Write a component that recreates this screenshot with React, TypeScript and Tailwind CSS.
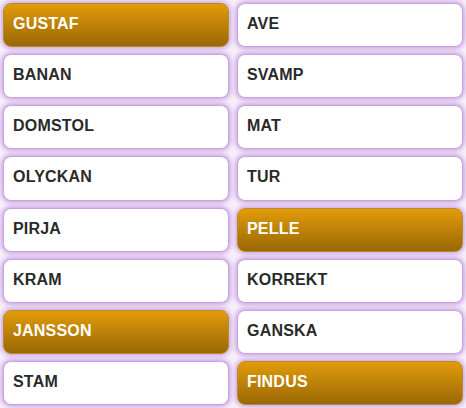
const left = ["GUSTAF", "BANAN", "DOMSTOL", "OLYCKAN", "PIRJA", "KRAM", "JANSSON", "STAM"];
const right = ["AVE", "SVAMP", "MAT", "TUR", "PELLE", "KORREKT", "GANSKA", "FINDUS"];
const picked = new Set(["GUSTAF", "JANSSON", "PELLE", "FINDUS"]);

function Word({ text }: { text: string }) {
  const on = picked.has(text);
  return (
    <div
      className={
        on
          ? "flex items-center rounded-[8px] border border-[#b98a2a] bg-gradient-to-b from-[#e29c09] to-[#9a6806] pb-[2px] pl-[9px] text-white shadow-[0_0_4px_2px_rgba(190,140,220,0.7)]"
          : "flex items-center rounded-[8px] border border-[#c9a3e0] bg-white pb-[2px] pl-[9px] text-[#2a2a2a] shadow-[0_0_4px_2px_rgba(190,140,220,0.7)]"
      }
    >
      <span className="text-[16px] font-bold leading-none tracking-[0.2px]">{text}</span>
    </div>
  );
}

export default function App() {
  const cells: string[] = [];
  left.forEach((l, i) => {
    cells.push(l, right[i]);
  });
  return (
    <div
      className="grid h-[408px] w-[466px] grid-cols-2 grid-rows-8 gap-x-[8px] gap-y-[7px] bg-[#f7effa] p-[3px]"
      style={{ fontFamily: '"Liberation Sans", Arial, sans-serif' }}
    >
      {cells.map((c) => (
        <Word key={c} text={c} />
      ))}
    </div>
  );
}
